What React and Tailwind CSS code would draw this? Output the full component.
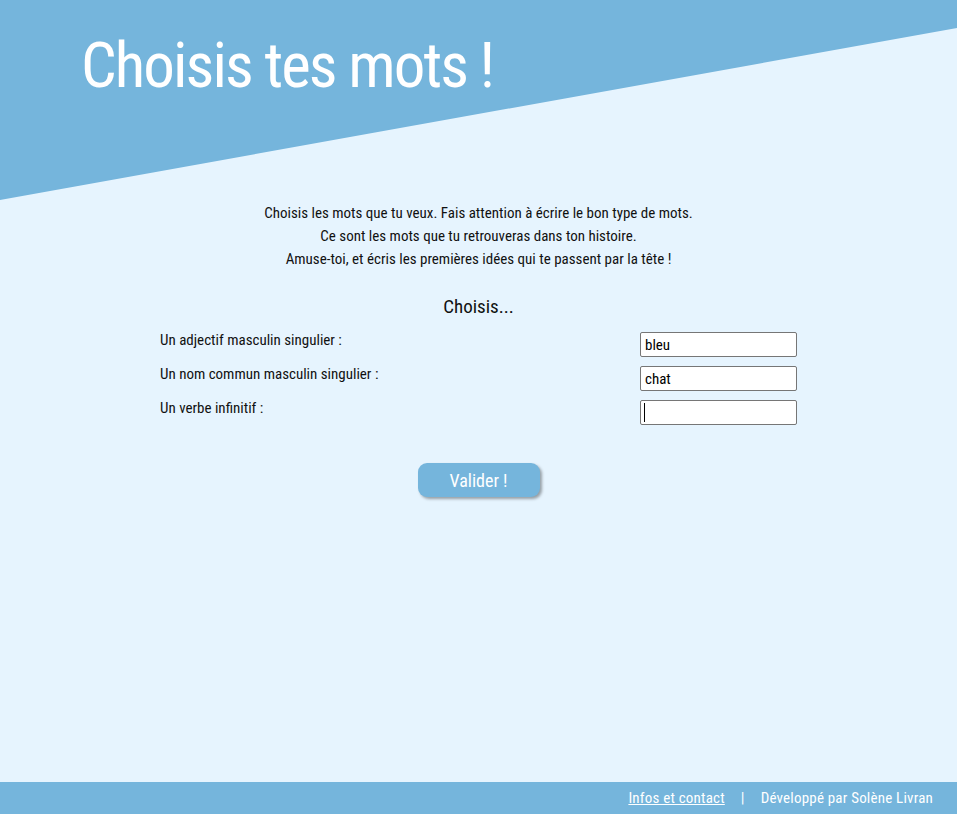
import React from "react";

const font = { fontFamily: "'Roboto Condensed', 'Liberation Sans', sans-serif" };

function Field({ label, value, caret }) {
  return (
    <div className="flex justify-between items-start h-[34px]">
      <label className="text-[15px] leading-[20px] mt-[-2px] text-[#111]">{label}</label>
      <div className="relative">
        <input
          readOnly
          value={value}
          className="w-[157px] h-[25px] bg-white border border-[#767676] rounded-[2px] px-[4px] text-[15px] text-black outline-none"
          style={font}
        />
        {caret && <span className="absolute left-[4px] top-[3px] w-[1px] h-[19px] bg-black" />}
      </div>
    </div>
  );
}

export default function App() {
  return (
    <div className="min-h-[814px] flex flex-col bg-[#e6f4fe]" style={font}>
      <header className="relative h-[200px]">
        <svg className="absolute inset-0 w-full h-full" viewBox="0 0 957 200" preserveAspectRatio="none">
          <polygon points="0,0 957,0 957,28 0,200" fill="#75b5dc" />
        </svg>
        <h1 className="relative pl-[81px] pt-[33px] text-[63px] leading-[66px] tracking-[-1.9px] text-white font-normal">
          Choisis tes mots !
        </h1>
      </header>
      <main className="flex-1 flex flex-col items-center">
        <p className="mt-[2px] text-center text-[15px] leading-[23px] text-[#111]">
          Choisis les mots que tu veux. Fais attention à écrire le bon type de mots.
          <br />
          Ce sont les mots que tu retrouveras dans ton histoire.
          <br />
          Amuse-toi, et écris les premières idées qui te passent par la tête !
        </p>
        <h2 className="mt-[22px] text-[19px] leading-[28px] text-[#111]">Choisis...</h2>
        <form className="w-[637px] mt-[11px] flex flex-col" onSubmit={(e) => e.preventDefault()}>
          <Field label="Un adjectif masculin singulier :" value="bleu" />
          <Field label="Un nom commun masculin singulier :" value="chat" />
          <Field label="Un verbe infinitif :" value="" caret />
          <div className="flex justify-center mt-[29px]">
            <button
              type="submit"
              className="w-[122px] h-[34px] rounded-[9px] bg-[#75b5dc] text-white text-[18px] shadow-[2px_2px_3px_rgba(0,0,0,0.35)]"
              style={font}
            >
              Valider !
            </button>
          </div>
        </form>
      </main>
      <footer className="h-[32px] bg-[#75b5dc] flex items-center justify-end pr-[24px] text-[15px] tracking-[0.2px] text-white">
        <a href="#" className="underline">Infos et contact</a>
        <span className="mx-[16px]">|</span>
        <span>Développé par Solène Livran</span>
      </footer>
    </div>
  );
}
